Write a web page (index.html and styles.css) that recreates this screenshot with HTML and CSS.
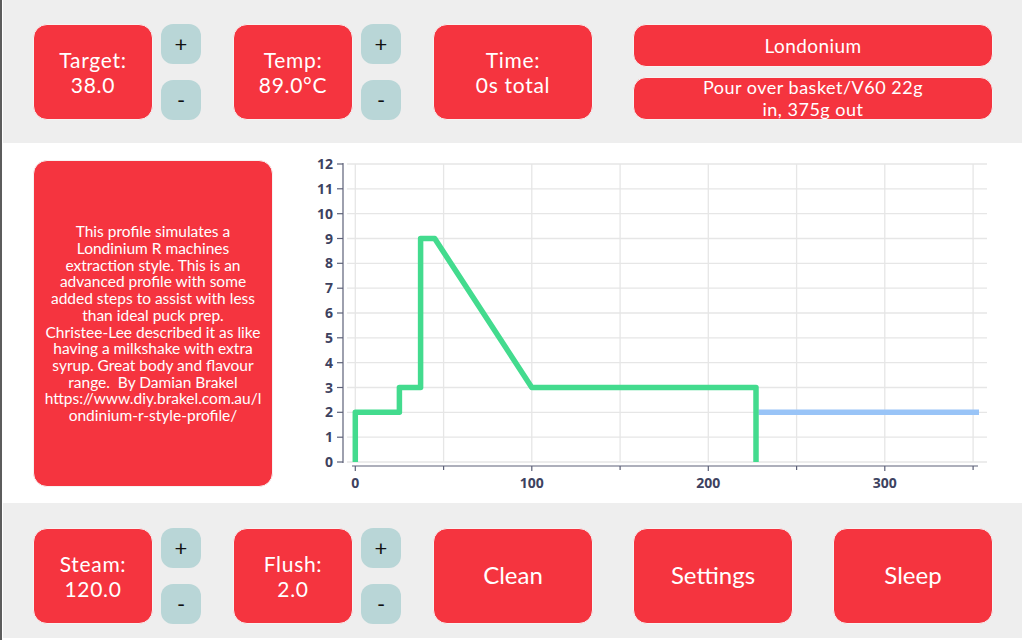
FILE: index.html
```html
<!DOCTYPE html>
<html>
<head>
<meta charset="utf-8">
<link rel="stylesheet" href="styles.css">
</head>
<body>
<div class="screen">
  <header class="bar bar-top">
    <div class="group">
      <div class="btn stat"><span>Target:</span><span>38.0</span></div>
      <div class="pm"><div class="pm-btn">+</div><div class="pm-btn">-</div></div>
    </div>
    <div class="group">
      <div class="btn stat"><span>Temp:</span><span>89.0°C</span></div>
      <div class="pm"><div class="pm-btn">+</div><div class="pm-btn">-</div></div>
    </div>
    <div class="group">
      <div class="btn stat wide-stat"><span>Time:</span><span>0s total</span></div>
    </div>
    <div class="group group-profile">
      <div class="btn name">Londonium</div>
      <div class="btn name"><span class="name-text">Pour over basket/V60 22g<br>in, 375g out</span></div>
    </div>
  </header>

  <main class="middle">
    <div class="desc"><p class="desc-text">This profile simulates a<br>Londinium R machines<br>extraction style. This is an<br>advanced profile with some<br>added steps to assist with less<br>than ideal puck prep.<br>Christee-Lee described it as like<br>having a milkshake with extra<br>syrup. Great body and flavour<br>range.&nbsp; By Damian Brakel<br>https://www.diy.brakel.com.au/l<br>ondinium-r-style-profile/</p></div>
    <svg class="chart" width="700" height="350" viewBox="0 0 700 350">
      <g class="grid">
        <line x1="47" y1="14" x2="687" y2="14"/>
        <line x1="47" y1="38.8" x2="687" y2="38.8"/>
        <line x1="47" y1="63.7" x2="687" y2="63.7"/>
        <line x1="47" y1="88.5" x2="687" y2="88.5"/>
        <line x1="47" y1="113.3" x2="687" y2="113.3"/>
        <line x1="47" y1="138.2" x2="687" y2="138.2"/>
        <line x1="47" y1="163" x2="687" y2="163"/>
        <line x1="47" y1="187.8" x2="687" y2="187.8"/>
        <line x1="47" y1="212.7" x2="687" y2="212.7"/>
        <line x1="47" y1="237.5" x2="687" y2="237.5"/>
        <line x1="47" y1="262.3" x2="687" y2="262.3"/>
        <line x1="47" y1="287.2" x2="687" y2="287.2"/>
        <line x1="47" y1="312" x2="687" y2="312"/>
        <line x1="55.3" y1="14" x2="55.3" y2="312"/>
        <line x1="143.6" y1="14" x2="143.6" y2="312"/>
        <line x1="231.8" y1="14" x2="231.8" y2="312"/>
        <line x1="320.1" y1="14" x2="320.1" y2="312"/>
        <line x1="408.3" y1="14" x2="408.3" y2="312"/>
        <line x1="496.6" y1="14" x2="496.6" y2="312"/>
        <line x1="584.8" y1="14" x2="584.8" y2="312"/>
        <line x1="673.1" y1="14" x2="673.1" y2="312"/>
      </g>
      <g class="axis">
        <line x1="43" y1="13" x2="43" y2="313"/>
        <line x1="37" y1="14" x2="43" y2="14"/>
        <line x1="37" y1="38.8" x2="43" y2="38.8"/>
        <line x1="37" y1="63.7" x2="43" y2="63.7"/>
        <line x1="37" y1="88.5" x2="43" y2="88.5"/>
        <line x1="37" y1="113.3" x2="43" y2="113.3"/>
        <line x1="37" y1="138.2" x2="43" y2="138.2"/>
        <line x1="37" y1="163" x2="43" y2="163"/>
        <line x1="37" y1="187.8" x2="43" y2="187.8"/>
        <line x1="37" y1="212.7" x2="43" y2="212.7"/>
        <line x1="37" y1="237.5" x2="43" y2="237.5"/>
        <line x1="37" y1="262.3" x2="43" y2="262.3"/>
        <line x1="37" y1="287.2" x2="43" y2="287.2"/>
        <line x1="37" y1="312" x2="43" y2="312"/>
        <line x1="52" y1="316" x2="678" y2="316"/>
        <line x1="55.3" y1="316" x2="55.3" y2="321"/>
        <line x1="143.6" y1="316" x2="143.6" y2="320"/>
        <line x1="231.8" y1="316" x2="231.8" y2="321"/>
        <line x1="320.1" y1="316" x2="320.1" y2="320"/>
        <line x1="408.3" y1="316" x2="408.3" y2="321"/>
        <line x1="496.6" y1="316" x2="496.6" y2="320"/>
        <line x1="584.8" y1="316" x2="584.8" y2="321"/>
        <line x1="673.1" y1="316" x2="673.1" y2="320"/>
      </g>
      <g class="ylabels">
        <text x="33" y="19">12</text>
        <text x="33" y="43.8">11</text>
        <text x="33" y="68.7">10</text>
        <text x="33" y="93.5">9</text>
        <text x="33" y="118.3">8</text>
        <text x="33" y="143.2">7</text>
        <text x="33" y="168">6</text>
        <text x="33" y="192.8">5</text>
        <text x="33" y="217.7">4</text>
        <text x="33" y="242.5">3</text>
        <text x="33" y="267.3">2</text>
        <text x="33" y="292.2">1</text>
        <text x="33" y="317">0</text>
      </g>
      <g class="xlabels">
        <text x="55.3" y="338">0</text>
        <text x="231.8" y="338">100</text>
        <text x="408.3" y="338">200</text>
        <text x="584.8" y="338">300</text>
      </g>
      <polyline class="flow-line" points="679,262.3 458.5,262.3"/>
      <polyline class="pressure-line" points="55.3,312 55.3,262.3 99.4,262.3 99.4,237.5 120.6,237.5 120.6,88.5 134.7,88.5 231.8,237.5 456,237.5 456,312"/>
    </svg>
  </main>

  <footer class="bar bar-bottom">
    <div class="group">
      <div class="btn stat"><span>Steam:</span><span>120.0</span></div>
      <div class="pm"><div class="pm-btn">+</div><div class="pm-btn">-</div></div>
    </div>
    <div class="group">
      <div class="btn stat"><span>Flush:</span><span>2.0</span></div>
      <div class="pm"><div class="pm-btn">+</div><div class="pm-btn">-</div></div>
    </div>
    <div class="group"><div class="btn action">Clean</div></div>
    <div class="group"><div class="btn action">Settings</div></div>
    <div class="group"><div class="btn action">Sleep</div></div>
  </footer>
</div>
</body>
</html>
```

FILE: styles.css
```css
html, body {
  margin: 0;
  padding: 0;
  background: #ffffff;
}

body {
  width: 1024px;
  height: 640px;
  overflow: hidden;
  font-family: Lato, "Noto Sans", sans-serif;
}

.screen {
  box-sizing: border-box;
  width: 1024px;
  height: 640px;
  border-left: 2px solid #5c5c5c;
  display: flex;
  flex-direction: column;
}

.bar {
  background: #eeeeee;
  margin: 0 2px 0 1px;
  display: flex;
  box-sizing: border-box;
  padding-left: 30px;
}

.bar-top {
  height: 143px;
  padding-top: 24px;
}

.bar-bottom {
  height: 135px;
  padding-top: 25px;
}

.group {
  flex: 0 0 200px;
  display: flex;
  gap: 8px;
  align-items: flex-start;
}

.btn {
  box-sizing: border-box;
  background: #f5343f;
  color: #ffffff;
  border: 1px solid #f8f2f2;
  border-radius: 14px;
  display: flex;
  align-items: center;
  justify-content: center;
  text-align: center;
}

.stat {
  width: 120px;
  height: 96px;
  flex-direction: column;
  font-size: 21px;
  line-height: 25.5px;
  letter-spacing: 0.7px;
}

.wide-stat {
  width: 160px;
}

.action {
  width: 160px;
  height: 96px;
  font-size: 24px;
  padding-bottom: 3px;
}

.pm {
  display: flex;
  flex-direction: column;
  justify-content: space-between;
  height: 96px;
}

.pm-btn {
  width: 40px;
  height: 40px;
  border-radius: 12px;
  background: #b9d6d7;
  color: #111111;
  font-size: 22px;
  display: flex;
  align-items: center;
  justify-content: center;
  line-height: 1;
}

.group-profile {
  flex: 0 0 360px;
  flex-direction: column;
  gap: 10px;
}

.name {
  width: 360px;
  height: 43px;
  font-size: 19px;
  line-height: 23px;
  border-radius: 13px;
  letter-spacing: 0.4px;
}

.name-text {
  line-height: 21.6px;
  font-size: 18px;
  letter-spacing: 0.5px;
}

.middle {
  height: 360px;
  box-sizing: border-box;
  display: flex;
  align-items: flex-start;
  padding: 17px 0 0 31px;
}

.desc {
  box-sizing: border-box;
  width: 240px;
  height: 327px;
  background: #f5343f;
  color: #ffffff;
  border: 1px solid #f8f2f2;
  border-radius: 14px;
  padding: 0 2px;
  display: flex;
  align-items: center;
  justify-content: center;
  text-align: center;
  font-size: 15.5px;
  line-height: 16.7px;
}

.desc-text {
  margin: 0;
  white-space: nowrap;
}

.chart {
  display: block;
  margin: -10px 0 0 27px;
}

.grid line {
  stroke: #e6e6e6;
  stroke-width: 1.3;
}

.axis line {
  stroke: #5d6178;
  stroke-width: 1.2;
}

.ylabels text,
.xlabels text {
  font-family: "Open Sans", "Noto Sans", sans-serif;
  font-weight: 700;
  font-size: 14px;
  fill: #3d4260;
}

.ylabels text {
  text-anchor: end;
}

.xlabels text {
  text-anchor: middle;
}

.pressure-line {
  fill: none;
  stroke: #43db8e;
  stroke-width: 5.5;
  stroke-linejoin: round;
}

.flow-line {
  fill: none;
  stroke: #99c4f7;
  stroke-width: 5.5;
}
```
